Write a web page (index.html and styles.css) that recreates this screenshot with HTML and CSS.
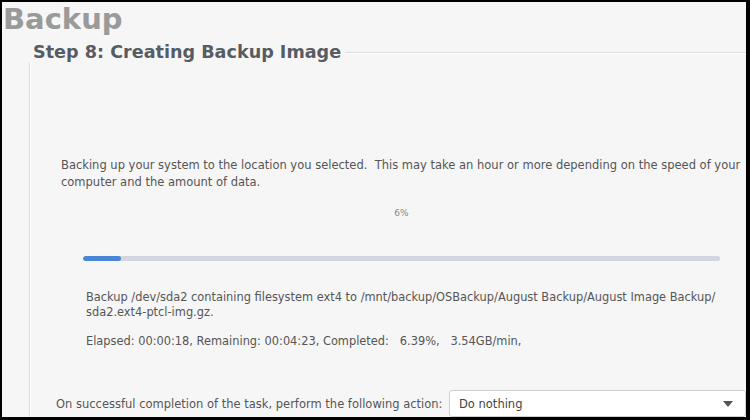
FILE: index.html
```html
<!DOCTYPE html>
<html>
<head>
<meta charset="utf-8">
<link rel="stylesheet" href="styles.css">
</head>
<body>
<div class="window">
  <h1 class="app-title">Backup</h1>
  <div class="frame">
    <div class="frame-head">
      <span class="frame-label">Step 8: Creating Backup Image</span>
      <span class="frame-rule"></span>
    </div>
    <div class="frame-body">
      <p class="intro">Backing up your system to the location you selected.&nbsp; This may take an hour or more depending on the speed of your<br>computer and the amount of data.</p>
      <div class="percent">6%</div>
      <div class="progress"><div class="progress-fill" style="width:6%"></div></div>
      <div class="details">
        <p class="detail-line">Backup /dev/sda2 containing filesystem ext4 to /mnt/backup/OSBackup/August Backup/August Image Backup/<br>sda2.ext4-ptcl-img.gz.</p>
        <p class="detail-line">Elapsed: 00:00:18, Remaining: 00:04:23, Completed: &nbsp; 6.39%, &nbsp; 3.54GB/min,</p>
      </div>
      <div class="action-row">
        <span class="action-label">On successful completion of the task, perform the following action:</span>
        <div class="combo">
          <span class="combo-text">Do nothing</span>
          <svg class="combo-arrow" width="10" height="6" viewBox="0 0 10 6"><path d="M0 0 H10 L5 6 Z" fill="#555"/></svg>
        </div>
      </div>
    </div>
  </div>
</div>
</body>
</html>
```
FILE: styles.css
```css
html, body {
  margin: 0;
  padding: 0;
  background: #000;
}
body {
  width: 750px;
  height: 420px;
  overflow: hidden;
  font-family: "DejaVu Sans", sans-serif;
}
.window {
  margin: 2px 4px 0 2px;
  width: 744px;
  height: 415px;
  background: #f6f6f7;
  overflow: hidden;
  display: flex;
  flex-direction: column;
}
.app-title {
  margin: 0;
  padding: 1px 0 0 1px;
  font-size: 29px;
  line-height: 32px;
  font-weight: bold;
  color: #999a9a;
}
.frame {
  margin-left: 27px;
  flex: 1;
  display: flex;
  flex-direction: column;
}
.frame-head {
  display: flex;
  align-items: center;
  height: 20px;
  margin-top: 7px;
}
.frame-label {
  padding: 0 4px 0 4px;
  font-size: 17.6px;
  font-weight: bold;
  color: #575c63;
  white-space: nowrap;
}
.frame-rule {
  flex: 1;
  height: 1px;
  background: #dcdcdc;
  box-shadow: 0 1px 0 #ffffff;
}
.frame-body {
  flex: 1;
  border-left: 1px solid #dedede;
  box-shadow: inset 1px 0 0 #ffffff;
  padding-left: 31px;
  padding-right: 4px;
}
.intro {
  margin: 95px 0 0 0;
  font-size: 11.5px;
  line-height: 17px;
  color: #555;
}
.percent {
  margin-top: 16px;
  text-align: center;
  font-size: 9px;
  line-height: 12px;
  color: #888;
}
.progress {
  margin: 37px 22px 0 22px;
  height: 5px;
  border-radius: 3px;
  background: #d2d7df;
  overflow: hidden;
}
.progress-fill {
  height: 100%;
  background: #4a86d6;
  border-radius: 3px;
}
.details {
  padding-left: 25px;
  margin-top: 29px;
}
.detail-line {
  margin: 0 0 14px 0;
  font-size: 11.4px;
  line-height: 15px;
  color: #555;
}
.action-row {
  margin-top: 41px;
  margin-left: -5px;
  margin-right: -4px;
  display: flex;
  align-items: center;
  justify-content: space-between;
}
.action-label {
  font-size: 11.5px;
  color: #555;
  white-space: nowrap;
}
.combo {
  width: 297px;
  height: 27px;
  box-sizing: border-box;
  border: 1px solid #cfcfcf;
  border-radius: 3px;
  background: #fff;
  display: flex;
  align-items: center;
  justify-content: space-between;
  padding: 0 12px 0 9px;
}
.combo-text {
  font-size: 11.5px;
  color: #444;
}
.combo-arrow {
  display: block;
}
```
